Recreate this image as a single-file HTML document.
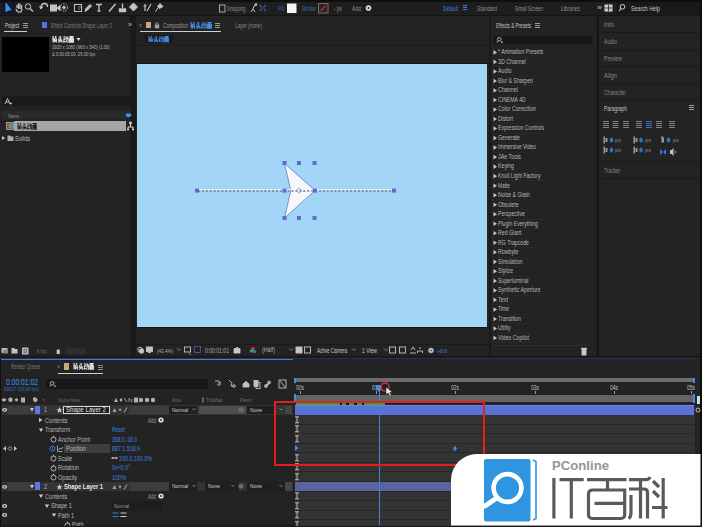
<!DOCTYPE html>
<html><head><meta charset="utf-8">
<style>
*{margin:0;padding:0;box-sizing:border-box}
html,body{width:702px;height:527px;overflow:hidden;background:#1a1a1a;font-family:"Liberation Sans",sans-serif;font-size:7px;line-height:1}
.a{position:absolute}
.t{position:absolute;white-space:nowrap;line-height:1;transform-origin:0 0}
svg{overflow:visible}
</style></head><body>
<div class="a" style="left:0px;top:0px;width:702px;height:16px;background:#1e1e1e;"></div>
<div class="a" style="left:0px;top:0px;width:702px;height:1.5px;background:#0e0e0e;"></div>
<div class="a" style="left:0px;top:14.5px;width:702px;height:2px;background:#141414;"></div>
<div class="a" style="left:616px;top:2px;width:84px;height:12px;background:#191919;"></div>
<div class="a" style="left:0px;top:16px;width:130px;height:340px;background:#232323;"></div>
<div class="a" style="left:136px;top:16px;width:353px;height:340px;background:#232323;"></div>
<div class="a" style="left:491px;top:16px;width:105px;height:340px;background:#232323;"></div>
<div class="a" style="left:599px;top:16px;width:101px;height:340px;background:#232323;"></div>
<div class="a" style="left:137px;top:64px;width:350px;height:263px;background:#a2d5f6;"></div>
<div class="a" style="left:0px;top:359px;width:700px;height:166px;background:#232323;"></div>
<div class="a" style="left:0px;top:357.5px;width:702px;height:2.5px;background:#1e3462;"></div>
<div class="a" style="left:0px;top:358.5px;width:702px;height:1px;background:#5478c0;"></div>
<svg class="a" style="left:0;top:0" width="702" height="16" viewBox="0 0 702 16">
<g fill="none" stroke="#c4c4c4" stroke-width="1">
<rect x="1.5" y="1.5" width="13" height="13" fill="#14192a" stroke="none"/>
<path d="M6 3 L6 12 L8 10 L11 10 Z" fill="#3d8df0" stroke="#3d8df0"/>
<path d="M17 8 L17 5 M18.5 9 L18.5 3.5 M20 9 L20 3.5 M21.5 9 L21.5 5 M16 9 Q17 12 19 12 L21 12 L22 9" stroke-width="1.2"/>
<circle cx="28" cy="6.5" r="2.7"/><path d="M30 8.5 L33 11.5" stroke-width="1.4"/>
<path d="M41 8 Q41 3.5 44.5 3.5 Q47.5 3.5 47.5 7" stroke-width="1.4"/><path d="M39.5 6.5 L41 9 L42.8 6.8" fill="#c4c4c4"/>
<rect x="50.5" y="5" width="6" height="6" fill="#c4c4c4"/><path d="M57 8 L60 5.5 L60 10.5 Z" fill="#c4c4c4"/>
<circle cx="64" cy="7.5" r="3.6" stroke-dasharray="1.4 1.2"/><circle cx="64" cy="7.5" r="1.3" fill="#c4c4c4"/>
<rect x="74.5" y="4.5" width="7" height="7"/><path d="M78 7 L81 7 M78 9 L80 9" stroke="#777"/>
<path d="M85 11.5 L86 8.5 L90 4.5 L91.5 6 L87.5 10 Z" fill="#c4c4c4"/>
<path d="M96 4.5 L102 4.5 M99 4.5 L99 11 M97.5 11 L100.5 11" stroke-width="1.3"/>
<path d="M109 11.5 L115.5 4" stroke-width="1.5"/>
<path d="M122.5 3.5 L122.5 8 M119.5 9 L125.5 9 L125.5 11.5 L119.5 11.5 Z" fill="#c4c4c4" stroke-width="1.3"/>
<path d="M133.5 3 L137.5 7 L133.5 11 L129.5 7 Z" fill="#c4c4c4"/>
<path d="M145 4 L145 11 M143.5 6 L146.5 6 M147 11 L151 4" stroke-width="1.2"/>
<path d="M160 3.5 L163 6.5 L159.5 8.5 L157.5 6.5 Z M158 8 L155.5 11.5" fill="#c4c4c4"/>
<rect x="219.5" y="5" width="5.5" height="7" stroke="#a8a8a8"/>
<path d="M251 12 L253 9 L255 12 M253 9 L254 6 L256 5" stroke="#c4c4c4"/><circle cx="256" cy="4.5" r="0.9" fill="#c4c4c4"/>
<path d="M259.5 5 L262 7.5 M266 5 L263.5 7.5 M259.5 11 L262 8.5 M266 11 L263.5 8.5" stroke="#3a62a0" stroke-width="1.1"/>
<rect x="287" y="3.5" width="9.5" height="9.5" fill="#f4f4f4" stroke="none"/>
<rect x="318.5" y="3.5" width="9.5" height="9.5" fill="#262626" stroke="#7a6a6a"/><path d="M320.5 11 L326 5.5" stroke="#c02828" stroke-width="1.4"/>
<circle cx="368.5" cy="8" r="2.8" fill="#d8d8d8" stroke="none"/><circle cx="368.5" cy="8" r="1" fill="#1b1b1b" stroke="none"/>
<path d="M463 5.5 H467 M463 7.5 H467 M463 9.5 H467" stroke="#3b7fd8"/>
<rect x="604.5" y="4.5" width="8" height="7" fill="#cfcfcf" stroke="none"/><path d="M608.5 5 L608.5 11 M605 8 L612 8" stroke="#1b1b1b" stroke-width="0.8"/>
<circle cx="622.5" cy="6.8" r="2.3" stroke="#d0d0d0"/><path d="M621 8.5 L619 11" stroke="#d0d0d0" stroke-width="1.2"/>
</g></svg>
<div class="t" style="left:227px;top:5.13px;font-size:7px;color:#8e8e8e;transform:scaleX(0.625);">Snapping</div>
<div class="t" style="left:278px;top:4.63px;font-size:7px;color:#3468b8;transform:scaleX(0.671);">Fill</div>
<div class="t" style="left:302px;top:4.63px;font-size:7px;color:#3468b8;transform:scaleX(0.692);">Stroke</div>
<div class="t" style="left:334px;top:5.13px;font-size:7px;color:#8e8e8e;transform:scaleX(0.686);">- px</div>
<div class="t" style="left:352px;top:4.63px;font-size:7px;color:#8e8e8e;transform:scaleX(0.694);">Add:</div>
<div class="t" style="left:443px;top:4.63px;font-size:7px;color:#3d86e0;transform:scaleX(0.676);">Default</div>
<div class="t" style="left:477px;top:5.13px;font-size:7px;color:#8e8e8e;transform:scaleX(0.704);">Standard</div>
<div class="t" style="left:515px;top:5.13px;font-size:7px;color:#8e8e8e;transform:scaleX(0.673);">Small Screen</div>
<div class="t" style="left:561px;top:5.13px;font-size:7px;color:#8e8e8e;transform:scaleX(0.708);">Libraries</div>
<div class="t" style="left:597px;top:4.14px;font-size:8px;color:#c8c8c8;transform:scaleX(1.124);">»</div>
<div class="t" style="left:631px;top:5.13px;font-size:7px;color:#c8c8c8;transform:scaleX(0.753);">Search Help</div>
<div class="t" style="left:5px;top:21.63px;font-size:7px;color:#d4d4d4;transform:scaleX(0.643);">Project</div>
<div class="a" style="left:4px;top:30.5px;width:23px;height:1.2px;background:#cfcfcf;"></div>
<svg class="a" style="left:23px;top:23px" width="6" height="6"><path d="M0 0.5H5M0 2.5H5M0 4.5H5" stroke="#9a9a9a" stroke-width="1"/></svg>
<div class="a" style="left:42px;top:22px;width:5px;height:6px;background:#4f72e6;"></div>
<div class="t" style="left:51px;top:21.63px;font-size:7px;color:#7d7d7d;transform:scaleX(0.654);">Effect Controls Shape Layer 2</div>
<div class="t" style="left:128px;top:21.14px;font-size:8px;color:#bdbdbd;transform:scaleX(0.899);">»</div>
<div class="t" style="left:139px;top:23.09px;font-size:5px;color:#8a8a8a;transform:scaleX(1.200);">x</div>
<div class="a" style="left:146px;top:21.5px;width:4.5px;height:6.5px;background:#c8a878;"></div>
<svg class="a" style="left:154px;top:21px" width="6" height="8"><rect x="0.8" y="3.5" width="4.4" height="3.8" fill="#a0a0a0"/><path d="M1.8 3.5V2.2Q3 0.6 4.2 2.2V3.5" fill="none" stroke="#a0a0a0" stroke-width="0.8"/></svg>
<div class="t" style="left:163px;top:21.63px;font-size:7px;color:#9a9a9a;transform:scaleX(0.643);">Composition</div>
<svg class="a" style="left:190px;top:21.75px" width="22.0" height="6.5" viewBox="0 0 43 10" preserveAspectRatio="none"><g fill="none" stroke="#4a8ee8" stroke-width="1.75"><path transform="translate(0,0)" d="M1 1.5L4 1.5M6 1.5L9 1.5M2.5 0L1.5 3M7.5 0L6.5 3M0.5 4.5L9.5 4.5M2 5.5L2 10M2 5.5L5 5.5L5 10M2 7.8L5 7.8M7 6L7 9M9 5.5L9 10"/><path transform="translate(11,0)" d="M3 1L4.5 2.5M2 3.5L3.5 5M0.5 6.5L9.5 6.5M6 0L6 6.5Q5.5 9 1 10M6.5 7.5L9.5 10"/><path transform="translate(22,0)" d="M0.5 1.5L4.5 1.5M0 4.5L5 4.5M2.5 4.5L0.5 9L4.5 8.5M5 3L9.5 3L9.5 9.5L8 10M7.2 0.5L7.2 5Q6.5 8.5 5 10"/><path transform="translate(33,0)" d="M0.5 1L9.5 1M1 3L1 9.5L9 9.5L9 3M3 3L7 3L7 7.5L3 7.5ZM5 3L5 7.5M3 5.2L7 5.2"/></g></svg>
<svg class="a" style="left:215px;top:23px" width="6" height="6"><path d="M0 0.5H5M0 2.5H5M0 4.5H5" stroke="#9a9a9a" stroke-width="1"/></svg>
<div class="a" style="left:140px;top:30.5px;width:81px;height:1.2px;background:#cfcfcf;"></div>
<div class="t" style="left:235px;top:21.63px;font-size:7px;color:#8a8a8a;transform:scaleX(0.680);">Layer (none)</div>
<div class="a" style="left:144px;top:35px;width:29px;height:8px;background:#1a1a1a;border-radius:1px"></div>
<svg class="a" style="left:148px;top:36.00px" width="21.0" height="6" viewBox="0 0 43 10" preserveAspectRatio="none"><g fill="none" stroke="#4a8ee8" stroke-width="1.75"><path transform="translate(0,0)" d="M1 1.5L4 1.5M6 1.5L9 1.5M2.5 0L1.5 3M7.5 0L6.5 3M0.5 4.5L9.5 4.5M2 5.5L2 10M2 5.5L5 5.5L5 10M2 7.8L5 7.8M7 6L7 9M9 5.5L9 10"/><path transform="translate(11,0)" d="M3 1L4.5 2.5M2 3.5L3.5 5M0.5 6.5L9.5 6.5M6 0L6 6.5Q5.5 9 1 10M6.5 7.5L9.5 10"/><path transform="translate(22,0)" d="M0.5 1.5L4.5 1.5M0 4.5L5 4.5M2.5 4.5L0.5 9L4.5 8.5M5 3L9.5 3L9.5 9.5L8 10M7.2 0.5L7.2 5Q6.5 8.5 5 10"/><path transform="translate(33,0)" d="M0.5 1L9.5 1M1 3L1 9.5L9 9.5L9 3M3 3L7 3L7 7.5L3 7.5ZM5 3L5 7.5M3 5.2L7 5.2"/></g></svg>
<div class="a" style="left:136px;top:44.5px;width:353px;height:0.8px;background:#1c1c1c;"></div>
<div class="a" style="left:136px;top:62.8px;width:353px;height:1.2px;background:#141414;"></div>
<div class="a" style="left:136px;top:327px;width:353px;height:1px;background:#141414;"></div>
<div class="a" style="left:136px;top:343.5px;width:353px;height:1px;background:#1a1a1a;"></div>
<div class="t" style="left:496px;top:21.63px;font-size:7px;color:#c4c4c4;transform:scaleX(0.654);">Effects &amp; Presets</div>
<svg class="a" style="left:535px;top:23px" width="6" height="6"><path d="M0 0.5H5M0 2.5H5M0 4.5H5" stroke="#9a9a9a" stroke-width="1"/></svg>
<div class="a" style="left:494px;top:36px;width:99px;height:8px;background:#181818;"></div>
<svg class="a" style="left:496px;top:36px" width="8" height="8"><circle cx="3.2" cy="3.3" r="1.8" fill="none" stroke="#c0c0c0" stroke-width="0.9"/><path d="M2.2 4.8L0.8 6.6M5 6.2L6.8 6.2M5.9 5.3L5.9 7.1" stroke="#c0c0c0" stroke-width="0.8"/></svg>
<div class="a" style="left:2px;top:37px;width:47px;height:35px;background:#000000;"></div>
<svg class="a" style="left:52px;top:36.25px" width="22.0" height="6.5" viewBox="0 0 43 10" preserveAspectRatio="none"><g fill="none" stroke="#e6e6e6" stroke-width="1.875"><path transform="translate(0,0)" d="M1 1.5L4 1.5M6 1.5L9 1.5M2.5 0L1.5 3M7.5 0L6.5 3M0.5 4.5L9.5 4.5M2 5.5L2 10M2 5.5L5 5.5L5 10M2 7.8L5 7.8M7 6L7 9M9 5.5L9 10"/><path transform="translate(11,0)" d="M3 1L4.5 2.5M2 3.5L3.5 5M0.5 6.5L9.5 6.5M6 0L6 6.5Q5.5 9 1 10M6.5 7.5L9.5 10"/><path transform="translate(22,0)" d="M0.5 1.5L4.5 1.5M0 4.5L5 4.5M2.5 4.5L0.5 9L4.5 8.5M5 3L9.5 3L9.5 9.5L8 10M7.2 0.5L7.2 5Q6.5 8.5 5 10"/><path transform="translate(33,0)" d="M0.5 1L9.5 1M1 3L1 9.5L9 9.5L9 3M3 3L7 3L7 7.5L3 7.5ZM5 3L5 7.5M3 5.2L7 5.2"/></g></svg>
<svg class="a" style="left:76px;top:37px" width="5" height="5"><path d="M0.5 1L4.5 1L2.5 4Z" fill="#e0e0e0"/></svg>
<div class="t" style="left:52px;top:44.11px;font-size:6px;color:#b4b4b4;transform:scaleX(0.702);">1920 x 1080  (960 x 540) (1.00)</div>
<div class="t" style="left:52px;top:50.61px;font-size:6px;color:#b4b4b4;transform:scaleX(0.697);">&#916; 0:00:05:00, 25.00 fps</div>
<div class="a" style="left:2px;top:96px;width:128px;height:10px;background:#1a1a1a;"></div>
<svg class="a" style="left:4px;top:97px" width="9" height="8"><path d="M1 7L3.5 1.5L6 7M2 5H5M5.5 6.5H8M6.7 5.5V7.5" fill="none" stroke="#c8c8c8" stroke-width="0.9"/></svg>
<div class="a" style="left:2px;top:111px;width:128px;height:8px;background:#2a2a2a;"></div>
<div class="t" style="left:8px;top:112.61px;font-size:6px;color:#8c8c8c;transform:scaleX(0.687);">Name</div>
<svg class="a" style="left:125px;top:112px" width="7" height="6"><ellipse cx="3.5" cy="3" rx="3" ry="2" fill="#2f78d8"/><path d="M1.8 2.6L3.5 4L5.2 2.6" stroke="#cfe" stroke-width="0.6" fill="none"/></svg>
<div class="a" style="left:14px;top:121px;width:112px;height:10px;background:#a6a6a6;"></div>
<svg class="a" style="left:6px;top:122px" width="8" height="8"><rect x="0.5" y="0.5" width="7" height="7" fill="#555" stroke="#bbb" stroke-width="0.7"/><rect x="1.5" y="1.5" width="2" height="5" fill="#d44"/><rect x="3.5" y="1.5" width="2" height="5" fill="#4c4"/><rect x="5.5" y="1.5" width="1.5" height="5" fill="#48d"/></svg>
<svg class="a" style="left:17px;top:122.75px" width="20.0" height="6.5" viewBox="0 0 43 10" preserveAspectRatio="none"><g fill="none" stroke="#1a1a1a" stroke-width="1.625"><path transform="translate(0,0)" d="M1 1.5L4 1.5M6 1.5L9 1.5M2.5 0L1.5 3M7.5 0L6.5 3M0.5 4.5L9.5 4.5M2 5.5L2 10M2 5.5L5 5.5L5 10M2 7.8L5 7.8M7 6L7 9M9 5.5L9 10"/><path transform="translate(11,0)" d="M3 1L4.5 2.5M2 3.5L3.5 5M0.5 6.5L9.5 6.5M6 0L6 6.5Q5.5 9 1 10M6.5 7.5L9.5 10"/><path transform="translate(22,0)" d="M0.5 1.5L4.5 1.5M0 4.5L5 4.5M2.5 4.5L0.5 9L4.5 8.5M5 3L9.5 3L9.5 9.5L8 10M7.2 0.5L7.2 5Q6.5 8.5 5 10"/><path transform="translate(33,0)" d="M0.5 1L9.5 1M1 3L1 9.5L9 9.5L9 3M3 3L7 3L7 7.5L3 7.5ZM5 3L5 7.5M3 5.2L7 5.2"/></g></svg>
<svg class="a" style="left:127px;top:121px" width="7" height="10"><circle cx="3.5" cy="2" r="1.4" fill="#ddd"/><path d="M3.5 3V5.5M1 8.5V6H6V8.5" fill="none" stroke="#ddd" stroke-width="1"/><circle cx="1" cy="8.5" r="1" fill="#ddd"/><circle cx="6" cy="8.5" r="1" fill="#ddd"/></svg>
<svg class="a" style="left:1px;top:134px" width="16" height="8"><path d="M1 2L4 4L1 6Z" fill="#cfcfcf"/><path d="M6.5 1.5H9L10 2.5H12.5V7H6.5Z" fill="#b0b0b0"/></svg>
<div class="t" style="left:15px;top:135.13px;font-size:7px;color:#bcbcbc;transform:scaleX(0.787);">Solids</div>
<svg class="a" style="left:0;top:345px" width="130" height="12"><g fill="#c4c4c4">
<rect x="1.5" y="3" width="6" height="5" rx="1"/><rect x="3" y="4.5" width="5" height="4" rx="1" fill="#888"/>
<path d="M11.5 3H14L15 4H17.5V8.5H11.5Z"/>
<rect x="22" y="2.5" width="6.5" height="7" fill="#b9b9b9"/><rect x="23.5" y="4" width="3.5" height="4" fill="#4a77b0"/><rect x="24.5" y="5" width="1.5" height="2" fill="#d8a040"/>
<path d="M56 3.5H60.5M56.7 4.5H59.8V9H56.7Z"/>
</g><rect x="65" y="2.5" width="21" height="7" rx="3.5" fill="#2e2e2e"/></svg>
<div class="t" style="left:37px;top:348.59px;font-size:5px;color:#6e6e6e;transform:scaleX(0.818);">8 bpc</div>
<div class="a" style="left:0px;top:354.5px;width:702px;height:0.8px;background:#2a1c1c;"></div>
<div class="a" style="left:492px;top:56.699999999999996px;width:98px;height:0.8px;background:#282828;"></div>
<div class="a" style="left:492px;top:66.22px;width:98px;height:0.8px;background:#282828;"></div>
<div class="a" style="left:492px;top:75.74px;width:98px;height:0.8px;background:#282828;"></div>
<div class="a" style="left:492px;top:85.25999999999999px;width:98px;height:0.8px;background:#282828;"></div>
<div class="a" style="left:492px;top:94.77999999999999px;width:98px;height:0.8px;background:#282828;"></div>
<div class="a" style="left:492px;top:104.3px;width:98px;height:0.8px;background:#282828;"></div>
<div class="a" style="left:492px;top:113.82px;width:98px;height:0.8px;background:#282828;"></div>
<div class="a" style="left:492px;top:123.33999999999999px;width:98px;height:0.8px;background:#282828;"></div>
<div class="a" style="left:492px;top:132.86px;width:98px;height:0.8px;background:#282828;"></div>
<div class="a" style="left:492px;top:142.38px;width:98px;height:0.8px;background:#282828;"></div>
<div class="a" style="left:492px;top:151.9px;width:98px;height:0.8px;background:#282828;"></div>
<div class="a" style="left:492px;top:161.42000000000002px;width:98px;height:0.8px;background:#282828;"></div>
<div class="a" style="left:492px;top:170.94px;width:98px;height:0.8px;background:#282828;"></div>
<div class="a" style="left:492px;top:180.46px;width:98px;height:0.8px;background:#282828;"></div>
<div class="a" style="left:492px;top:189.98000000000002px;width:98px;height:0.8px;background:#282828;"></div>
<div class="a" style="left:492px;top:199.5px;width:98px;height:0.8px;background:#282828;"></div>
<div class="a" style="left:492px;top:209.02px;width:98px;height:0.8px;background:#282828;"></div>
<div class="a" style="left:492px;top:218.54000000000002px;width:98px;height:0.8px;background:#282828;"></div>
<div class="a" style="left:492px;top:228.06px;width:98px;height:0.8px;background:#282828;"></div>
<div class="a" style="left:492px;top:237.58px;width:98px;height:0.8px;background:#282828;"></div>
<div class="a" style="left:492px;top:247.1px;width:98px;height:0.8px;background:#282828;"></div>
<div class="a" style="left:492px;top:256.62px;width:98px;height:0.8px;background:#282828;"></div>
<div class="a" style="left:492px;top:266.14px;width:98px;height:0.8px;background:#282828;"></div>
<div class="a" style="left:492px;top:275.65999999999997px;width:98px;height:0.8px;background:#282828;"></div>
<div class="a" style="left:492px;top:285.18px;width:98px;height:0.8px;background:#282828;"></div>
<div class="a" style="left:492px;top:294.7px;width:98px;height:0.8px;background:#282828;"></div>
<div class="a" style="left:492px;top:304.21999999999997px;width:98px;height:0.8px;background:#282828;"></div>
<div class="a" style="left:492px;top:313.73999999999995px;width:98px;height:0.8px;background:#282828;"></div>
<div class="a" style="left:492px;top:323.26px;width:98px;height:0.8px;background:#282828;"></div>
<div class="a" style="left:492px;top:332.78px;width:98px;height:0.8px;background:#282828;"></div>
<div class="a" style="left:492px;top:342.29999999999995px;width:98px;height:0.8px;background:#282828;"></div>
<div class="t" style="left:498px;top:49.22px;font-size:6.6px;color:#b8b8b8;transform:scaleX(0.790);">* Animation Presets</div>
<div class="t" style="left:498px;top:58.74px;font-size:6.6px;color:#b8b8b8;transform:scaleX(0.798);">3D Channel</div>
<div class="t" style="left:498px;top:68.26px;font-size:6.6px;color:#b8b8b8;transform:scaleX(0.800);">Audio</div>
<div class="t" style="left:498px;top:77.78px;font-size:6.6px;color:#b8b8b8;transform:scaleX(0.782);">Blur &amp; Sharpen</div>
<div class="t" style="left:498px;top:87.30px;font-size:6.6px;color:#b8b8b8;transform:scaleX(0.814);">Channel</div>
<div class="t" style="left:498px;top:96.82px;font-size:6.6px;color:#b8b8b8;transform:scaleX(0.781);">CINEMA 4D</div>
<div class="t" style="left:498px;top:106.34px;font-size:6.6px;color:#b8b8b8;transform:scaleX(0.791);">Color Correction</div>
<div class="t" style="left:498px;top:115.86px;font-size:6.6px;color:#b8b8b8;transform:scaleX(0.787);">Distort</div>
<div class="t" style="left:498px;top:125.38px;font-size:6.6px;color:#b8b8b8;transform:scaleX(0.779);">Expression Controls</div>
<div class="t" style="left:498px;top:134.90px;font-size:6.6px;color:#b8b8b8;transform:scaleX(0.800);">Generate</div>
<div class="t" style="left:498px;top:144.42px;font-size:6.6px;color:#b8b8b8;transform:scaleX(0.775);">Immersive Video</div>
<div class="t" style="left:498px;top:153.94px;font-size:6.6px;color:#b8b8b8;transform:scaleX(0.807);">JAe Tools</div>
<div class="t" style="left:498px;top:163.46px;font-size:6.6px;color:#b8b8b8;transform:scaleX(0.793);">Keying</div>
<div class="t" style="left:498px;top:172.98px;font-size:6.6px;color:#b8b8b8;transform:scaleX(0.778);">Knoll Light Factory</div>
<div class="t" style="left:498px;top:182.50px;font-size:6.6px;color:#b8b8b8;transform:scaleX(0.727);">Matte</div>
<div class="t" style="left:498px;top:192.02px;font-size:6.6px;color:#b8b8b8;transform:scaleX(0.779);">Noise &amp; Grain</div>
<div class="t" style="left:498px;top:201.54px;font-size:6.6px;color:#b8b8b8;transform:scaleX(0.776);">Obsolete</div>
<div class="t" style="left:498px;top:211.06px;font-size:6.6px;color:#b8b8b8;transform:scaleX(0.783);">Perspective</div>
<div class="t" style="left:498px;top:220.58px;font-size:6.6px;color:#b8b8b8;transform:scaleX(0.779);">Plugin Everything</div>
<div class="t" style="left:498px;top:230.10px;font-size:6.6px;color:#b8b8b8;transform:scaleX(0.791);">Red Giant</div>
<div class="t" style="left:498px;top:239.62px;font-size:6.6px;color:#b8b8b8;transform:scaleX(0.790);">RG Trapcode</div>
<div class="t" style="left:498px;top:249.14px;font-size:6.6px;color:#b8b8b8;transform:scaleX(0.798);">Rowbyte</div>
<div class="t" style="left:498px;top:258.66px;font-size:6.6px;color:#b8b8b8;transform:scaleX(0.795);">Simulation</div>
<div class="t" style="left:498px;top:268.18px;font-size:6.6px;color:#b8b8b8;transform:scaleX(0.772);">Stylize</div>
<div class="t" style="left:498px;top:277.70px;font-size:6.6px;color:#b8b8b8;transform:scaleX(0.792);">Superluminal</div>
<div class="t" style="left:498px;top:287.22px;font-size:6.6px;color:#b8b8b8;transform:scaleX(0.788);">Synthetic Aperture</div>
<div class="t" style="left:498px;top:296.74px;font-size:6.6px;color:#b8b8b8;transform:scaleX(0.826);">Text</div>
<div class="t" style="left:498px;top:306.26px;font-size:6.6px;color:#b8b8b8;transform:scaleX(0.763);">Time</div>
<div class="t" style="left:498px;top:315.78px;font-size:6.6px;color:#b8b8b8;transform:scaleX(0.801);">Transition</div>
<div class="t" style="left:498px;top:325.30px;font-size:6.6px;color:#b8b8b8;transform:scaleX(0.775);">Utility</div>
<div class="t" style="left:498px;top:334.82px;font-size:6.6px;color:#b8b8b8;transform:scaleX(0.792);">Video Copilot</div>
<svg class="a" style="left:493px;top:44px" width="6" height="300"><g fill="#c8c8c8"><path d="M0.5 6.10L4 8.40L0.5 10.70Z"/><path d="M0.5 15.62L4 17.92L0.5 20.22Z"/><path d="M0.5 25.14L4 27.44L0.5 29.74Z"/><path d="M0.5 34.66L4 36.96L0.5 39.26Z"/><path d="M0.5 44.18L4 46.48L0.5 48.78Z"/><path d="M0.5 53.70L4 56.00L0.5 58.30Z"/><path d="M0.5 63.22L4 65.52L0.5 67.82Z"/><path d="M0.5 72.74L4 75.04L0.5 77.34Z"/><path d="M0.5 82.26L4 84.56L0.5 86.86Z"/><path d="M0.5 91.78L4 94.08L0.5 96.38Z"/><path d="M0.5 101.30L4 103.60L0.5 105.90Z"/><path d="M0.5 110.82L4 113.12L0.5 115.42Z"/><path d="M0.5 120.34L4 122.64L0.5 124.94Z"/><path d="M0.5 129.86L4 132.16L0.5 134.46Z"/><path d="M0.5 139.38L4 141.68L0.5 143.98Z"/><path d="M0.5 148.90L4 151.20L0.5 153.50Z"/><path d="M0.5 158.42L4 160.72L0.5 163.02Z"/><path d="M0.5 167.94L4 170.24L0.5 172.54Z"/><path d="M0.5 177.46L4 179.76L0.5 182.06Z"/><path d="M0.5 186.98L4 189.28L0.5 191.58Z"/><path d="M0.5 196.50L4 198.80L0.5 201.10Z"/><path d="M0.5 206.02L4 208.32L0.5 210.62Z"/><path d="M0.5 215.54L4 217.84L0.5 220.14Z"/><path d="M0.5 225.06L4 227.36L0.5 229.66Z"/><path d="M0.5 234.58L4 236.88L0.5 239.18Z"/><path d="M0.5 244.10L4 246.40L0.5 248.70Z"/><path d="M0.5 253.62L4 255.92L0.5 258.22Z"/><path d="M0.5 263.14L4 265.44L0.5 267.74Z"/><path d="M0.5 272.66L4 274.96L0.5 277.26Z"/><path d="M0.5 282.18L4 284.48L0.5 286.78Z"/><path d="M0.5 291.70L4 294.00L0.5 296.30Z"/></g></svg>
<svg class="a" style="left:579.5px;top:347px" width="8" height="9"><rect x="1.5" y="2" width="5" height="6.5" fill="#c8c8c8"/><rect x="1" y="0.8" width="6" height="1.2" fill="#c8c8c8"/></svg>
<div class="a" style="left:491px;top:344.5px;width:99px;height:1px;background:#2e2e2e;"></div>
<div class="t" style="left:603.5px;top:21.13px;font-size:7px;color:#858585;transform:scaleX(0.857);">Info</div>
<div class="t" style="left:603.5px;top:38.13px;font-size:7px;color:#858585;transform:scaleX(0.726);">Audio</div>
<div class="t" style="left:603.5px;top:55.13px;font-size:7px;color:#858585;transform:scaleX(0.723);">Preview</div>
<div class="t" style="left:603.5px;top:71.63px;font-size:7px;color:#858585;transform:scaleX(0.835);">Align</div>
<div class="t" style="left:603.5px;top:88.63px;font-size:7px;color:#858585;transform:scaleX(0.716);">Character</div>
<div class="t" style="left:603.5px;top:105.13px;font-size:7px;color:#c4c4c4;transform:scaleX(0.704);">Paragraph</div>
<div class="a" style="left:602px;top:32px;width:96px;height:1px;background:#1a1a1a;"></div>
<div class="a" style="left:602px;top:49.5px;width:96px;height:1px;background:#1a1a1a;"></div>
<div class="a" style="left:602px;top:66px;width:96px;height:1px;background:#1a1a1a;"></div>
<div class="a" style="left:602px;top:83px;width:96px;height:1px;background:#1a1a1a;"></div>
<div class="a" style="left:602px;top:100px;width:96px;height:1px;background:#1a1a1a;"></div>
<svg class="a" style="left:689px;top:105px" width="6" height="7"><path d="M0 0.5H5M0 2.5H5M0 4.5H5" stroke="#9a9a9a" stroke-width="1"/></svg>
<svg class="a" style="left:0;top:0" width="702" height="200" viewBox="0 0 702 200"><g stroke="#8c8c8c" stroke-width="0.9"><path d="M603 121.5H609M603 123.5H609M603 125.5H609M603 127.5H609"/></g><g stroke="#8c8c8c" stroke-width="0.9"><path d="M612.5 121.5H618.5M612.5 123.5H618.5M612.5 125.5H618.5M612.5 127.5H618.5"/></g><g stroke="#8c8c8c" stroke-width="0.9"><path d="M623 121.5H629M623 123.5H629M623 125.5H629M623 127.5H629"/></g><g stroke="#8c8c8c" stroke-width="0.9"><path d="M636 121.5H642M636 123.5H642M636 125.5H642M636 127.5H642"/></g><g stroke="#3b78d8" stroke-width="0.9"><path d="M646 121.5H652M646 123.5H652M646 125.5H652M646 127.5H652"/></g><g stroke="#8c8c8c" stroke-width="0.9"><path d="M656 121.5H662M656 123.5H662M656 125.5H662M656 127.5H662"/></g><g stroke="#8c8c8c" stroke-width="0.9"><path d="M669 121.5H675M669 123.5H675M669 125.5H675M669 127.5H675"/></g></svg>
<svg class="a" style="left:600px;top:134px" width="100" height="24"><g fill="#9a9a9a">
<rect x="3.5" y="2.5" width="1.5" height="7"/><rect x="5.5" y="4" width="2" height="4"/><rect x="3.5" y="12.5" width="1.5" height="7"/><rect x="5.5" y="14" width="2" height="4"/>
<rect x="33.5" y="2.5" width="1.5" height="7"/><rect x="35.5" y="4" width="2" height="4"/><rect x="33.5" y="12.5" width="1.5" height="7"/><rect x="35.5" y="14" width="2" height="4"/>
<rect x="61.5" y="2" width="1.2" height="3"/><rect x="61.5" y="3.5" width="2.5" height="5"/>
</g><g fill="#2f6fd0">
<ellipse cx="11.5" cy="6" rx="1.8" ry="2.6"/><ellipse cx="11.5" cy="16" rx="1.8" ry="2.6"/>
<ellipse cx="41" cy="6" rx="1.8" ry="2.6"/><ellipse cx="41" cy="16" rx="1.8" ry="2.6"/>
<ellipse cx="68.5" cy="6" rx="1.8" ry="2.6"/>
<path d="M60 15L63 18L60 21ZM66 15L63 18L66 21Z" fill="#2f7ae0"/>
</g><g fill="#c0c0c0"><path d="M70 16H71.5L73.5 14V22L71.5 20H70Z"/><path d="M74.5 16.5l1.5 1.5l-1.5 1.5" stroke="#c0c0c0" stroke-width="0.7" fill="none"/></g></svg>
<div class="t" style="left:615px;top:137.11px;font-size:6px;color:#8e8e8e;transform:scaleX(0.947);">px</div>
<div class="t" style="left:615px;top:147.11px;font-size:6px;color:#8e8e8e;transform:scaleX(0.947);">px</div>
<div class="t" style="left:645px;top:137.11px;font-size:6px;color:#8e8e8e;transform:scaleX(0.947);">px</div>
<div class="t" style="left:645px;top:147.11px;font-size:6px;color:#8e8e8e;transform:scaleX(0.947);">px</div>
<div class="t" style="left:673px;top:137.11px;font-size:6px;color:#8e8e8e;transform:scaleX(0.947);">px</div>
<div class="a" style="left:602px;top:161px;width:96px;height:1px;background:#1a1a1a;"></div>
<div class="t" style="left:603.5px;top:166.63px;font-size:7px;color:#858585;transform:scaleX(0.703);">Tracker</div>
<div class="a" style="left:602px;top:178px;width:96px;height:1px;background:#1a1a1a;"></div>
<div class="a" style="left:596px;top:16px;width:3px;height:340px;background:#1e1e1e;"></div>
<div class="a" style="left:597px;top:16px;width:1.5px;height:340px;background:#151515;"></div>
<svg class="a" style="left:137px;top:64px" width="350" height="263" viewBox="137 64 350 263">
<path d="M284.5 163.5 L315 190.5 L284.5 218 L290.8 190.5Z" fill="#f7f8fa" stroke="#6f86d0" stroke-width="0.9"/>
<line x1="197" y1="189.9" x2="394" y2="189.9" stroke="#f4f6f8" stroke-width="1.3"/>
<line x1="198" y1="190.9" x2="394" y2="190.9" stroke="#707a98" stroke-width="1.5" stroke-dasharray="2 1.9"/>
<g fill="#5a6cd6">
<rect x="282.5" y="161" width="4" height="4"/><rect x="297" y="161" width="4" height="4"/><rect x="312.5" y="161" width="4" height="4"/>
<rect x="282.5" y="216" width="4" height="4"/><rect x="297" y="216" width="4" height="4"/><rect x="312.5" y="216" width="4" height="4"/>
<rect x="195" y="188.6" width="4" height="4"/><rect x="282.5" y="188.6" width="4" height="4"/><rect x="313" y="188.6" width="4" height="4"/><rect x="392" y="188.6" width="4" height="4"/>
</g>
<path d="M296 190.6 L299 188 L302 190.6 L299 193.2Z" fill="none" stroke="#8e9ac8" stroke-width="0.8"/>
</svg>
<svg class="a" style="left:136px;top:344px" width="353" height="13" viewBox="136 344 353 13"><g fill="none" stroke="#c4c4c4" stroke-width="0.9">
<circle cx="140" cy="349.5" r="2.3"/><circle cx="141.5" cy="351" r="2.3" fill="#c4c4c4"/>
<rect x="146.5" y="347" width="6" height="4.5" fill="#c4c4c4"/><path d="M148 352.5h3"/>
<rect x="184.5" y="347" width="6" height="5"/><path d="M189 353.5l1.5 1" />
<rect x="194.5" y="346.5" width="6" height="6" stroke="#5a6ae0" stroke-dasharray="2 1"/>
<path d="M234 348.5h6v4.5h-6z M236 347.5h2" fill="#c8c8c8"/>
<circle cx="253" cy="348.5" r="1.8" fill="#e03030" stroke="none"/><circle cx="251.5" cy="351" r="1.8" fill="#30b040" stroke="none"/><circle cx="254.5" cy="351.5" r="1.8" fill="#3070e0" stroke="none"/>
<rect x="296" y="347" width="6" height="6" fill="#c4c4c4"/><rect x="304.5" y="347" width="6" height="6"/>
<rect x="389.5" y="347" width="6" height="6"/><rect x="399.5" y="347" width="6" height="6"/>
<path d="M410 353h6M411 350l2-3l2 3" /><path d="M420 347v2M417.5 353v-2h5v2" /><circle cx="431" cy="350.5" r="2.3" fill="#c4c4c4"/><circle cx="431" cy="350.5" r="0.8" fill="#232323" stroke="none"/>
<path d="M177 348.5l2 2l2-2M289 348.5l2 2l2-2M352 348.5l2 2l2-2M384 348.5l2 2l2-2" stroke="#8a8a8a"/>
</g></svg>
<div class="t" style="left:157px;top:347.61px;font-size:6px;color:#a8a8a8;transform:scaleX(0.762);">(43.4%)</div>
<div class="t" style="left:205px;top:347.87px;font-size:6.5px;color:#a8a8a8;transform:scaleX(0.781);">0:00:01:01</div>
<div class="t" style="left:262px;top:347.37px;font-size:6.5px;color:#b0b0b0;transform:scaleX(0.818);">(Half)</div>
<div class="t" style="left:317px;top:347.13px;font-size:7px;color:#c8c8c8;transform:scaleX(0.654);">Active Camera</div>
<div class="t" style="left:362px;top:347.13px;font-size:7px;color:#c8c8c8;transform:scaleX(0.718);">1 View</div>
<div class="t" style="left:437px;top:347.61px;font-size:6px;color:#3b82e0;transform:scaleX(0.844);">+0.0</div>
<div class="t" style="left:11px;top:362.63px;font-size:7px;color:#7e7e7e;transform:scaleX(0.632);">Render Queue</div>
<div class="t" style="left:57px;top:364.09px;font-size:5px;color:#8a8a8a;transform:scaleX(1.200);">x</div>
<div class="a" style="left:64px;top:362.5px;width:4.5px;height:7px;background:#c8a878;"></div>
<svg class="a" style="left:73px;top:362.75px" width="21.0" height="6.5" viewBox="0 0 43 10" preserveAspectRatio="none"><g fill="none" stroke="#dcdcdc" stroke-width="1.875"><path transform="translate(0,0)" d="M1 1.5L4 1.5M6 1.5L9 1.5M2.5 0L1.5 3M7.5 0L6.5 3M0.5 4.5L9.5 4.5M2 5.5L2 10M2 5.5L5 5.5L5 10M2 7.8L5 7.8M7 6L7 9M9 5.5L9 10"/><path transform="translate(11,0)" d="M3 1L4.5 2.5M2 3.5L3.5 5M0.5 6.5L9.5 6.5M6 0L6 6.5Q5.5 9 1 10M6.5 7.5L9.5 10"/><path transform="translate(22,0)" d="M0.5 1.5L4.5 1.5M0 4.5L5 4.5M2.5 4.5L0.5 9L4.5 8.5M5 3L9.5 3L9.5 9.5L8 10M7.2 0.5L7.2 5Q6.5 8.5 5 10"/><path transform="translate(33,0)" d="M0.5 1L9.5 1M1 3L1 9.5L9 9.5L9 3M3 3L7 3L7 7.5L3 7.5ZM5 3L5 7.5M3 5.2L7 5.2"/></g></svg>
<svg class="a" style="left:98px;top:365px" width="6" height="6"><path d="M0 0.5H5M0 2.5H5M0 4.5H5" stroke="#8a8a8a" stroke-width="1"/></svg>
<div class="a" style="left:58px;top:372.5px;width:45px;height:1.2px;background:#cfcfcf;"></div>
<div class="t" style="left:6px;top:377.66px;font-size:9px;color:#3d8ff0;transform:scaleX(0.752);">0:00:01:02</div>
<div class="t" style="left:4px;top:387.09px;font-size:5px;color:#2e6cc0;transform:scaleX(0.893);">00027 (25.00 fps)</div>
<div class="a" style="left:46px;top:379px;width:162px;height:10px;background:#181818;"></div>
<svg class="a" style="left:49px;top:380px" width="9" height="8"><circle cx="3.2" cy="3.3" r="1.8" fill="none" stroke="#c0c0c0" stroke-width="0.9"/><path d="M2.2 4.8L0.8 6.6M5 6.2L6.8 6.2M5.9 5.3L5.9 7.1" stroke="#c0c0c0" stroke-width="0.8"/></svg>
<svg class="a" style="left:210px;top:377px" width="83" height="14" viewBox="210 377 83 14"><g fill="none" stroke="#c0c0c0" stroke-width="0.9">
<path d="M215 381h4l2 2h-3M217 384l2 1.5l2-1.5" /><path d="M229 380l3 3l-1 3h3" /><circle cx="234" cy="386" r="1.3"/>
<path d="M243 387v-3l3-2.5l3 2.5v3z" fill="#c0c0c0"/>
<rect x="254" y="380.5" width="4" height="6" fill="#c0c0c0"/><rect x="256" y="382.5" width="4" height="6"/>
<path d="M265 387l5-5" stroke-width="1.6"/><circle cx="266" cy="386" r="1.5"/><circle cx="269" cy="382.5" r="1.5"/>
<rect x="279" y="380" width="7" height="8"/><path d="M280 381l5 6"/>
</g></svg>
<div class="a" style="left:2px;top:396px;width:291px;height:8.5px;background:#232323;"></div>
<svg class="a" style="left:0;top:395px" width="293" height="10" viewBox="0 395 293 10"><g fill="#b0b0b0" stroke="none">
<ellipse cx="4" cy="399.8" rx="2.2" ry="1.6"/><circle cx="10.5" cy="399.8" r="2.2"/><circle cx="16.5" cy="399.8" r="1.6"/><rect x="21" y="397.5" width="4" height="5"/>
<path d="M33 397.5h3l2 2.5l-2.5 2.5l-2.5-2z"/><path d="M43.5 398.5l1 2h-2z" fill="#777"/>
<path d="M114 402h4l-2-4z"/><path d="M119.5 400l1.5-2l1.5 2l-1.5 2z"/><path d="M124 398l3 4" stroke="#b0b0b0" stroke-width="0.9"/>
<rect x="134" y="397.5" width="4" height="5"/><circle cx="141" cy="400" r="2.2"/><circle cx="147" cy="400" r="2.2"/><circle cx="153" cy="400" r="2.2"/>
<path d="M203 397.5v5" stroke="#b0b0b0" stroke-width="0.9"/>
</g></svg>
<div class="t" style="left:128px;top:397.59px;font-size:5px;color:#b0b0b0;transform:scaleX(1.286);">fx</div>
<div class="t" style="left:58px;top:397.59px;font-size:5px;color:#6e6e6e;transform:scaleX(0.720);">Source Name</div>
<div class="t" style="left:172px;top:397.59px;font-size:5px;color:#6e6e6e;transform:scaleX(0.720);">Mode</div>
<div class="t" style="left:206px;top:397.59px;font-size:5px;color:#6e6e6e;transform:scaleX(1.041);">TrkMat</div>
<div class="t" style="left:240px;top:397.59px;font-size:5px;color:#6e6e6e;transform:scaleX(0.815);">Parent</div>
<div class="a" style="left:2px;top:405px;width:291px;height:9.5px;background:#333333;"></div>
<div class="a" style="left:8px;top:405.5px;width:4.5px;height:8.5px;background:#3d3d3d;"></div>
<div class="a" style="left:13px;top:405.5px;width:4.5px;height:8.5px;background:#3d3d3d;"></div>
<div class="a" style="left:18px;top:405.5px;width:4.5px;height:8.5px;background:#3d3d3d;"></div>
<div class="a" style="left:23px;top:405.5px;width:4.5px;height:8.5px;background:#3d3d3d;"></div>
<div class="a" style="left:28px;top:405.5px;width:4.5px;height:8.5px;background:#3d3d3d;"></div>
<div class="a" style="left:35px;top:405.8px;width:4.5px;height:8px;background:#5b76e6;"></div>
<svg class="a" style="left:0;top:405px" width="170" height="10"><ellipse cx="4.6" cy="4.8" rx="2.6" ry="1.9" fill="#c8c8c8"/><circle cx="4.6" cy="4.8" r="0.9" fill="#333"/><path d="M30 3L34 3L32 6.5Z" fill="#c8c8c8"/><path d="M59.5 2l1 2.2h2.2l-1.8 1.4l0.7 2.3l-2.1-1.4l-2.1 1.4l0.7-2.3l-1.8-1.4h2.2z" fill="#c8c8c8"/><path d="M112.5 7h4l-2-4z M118.5 4.8l1.5-1.5l1.5 1.5l-1.5 1.5z" fill="#a0a0a0"/><path d="M124 7.5l3-5" stroke="#c0c0c0" stroke-width="0.9"/></svg>
<div class="t" style="left:44px;top:406.43px;font-size:7px;color:#bdbdbd;transform:scaleX(0.771);">1</div>
<div class="a" style="left:63px;top:405.5px;width:46.5px;height:8.5px;background:#1e1e1e;border:1px solid #d8d8d8"></div>
<div class="t" style="left:66px;top:406.43px;font-size:7px;color:#e0e0e0;transform:scaleX(0.879);">Shape Layer 2</div>
<div class="a" style="left:130px;top:405.5px;width:5.5px;height:8.5px;background:#3d3d3d;"></div>
<div class="a" style="left:136px;top:405.5px;width:5.5px;height:8.5px;background:#3d3d3d;"></div>
<div class="a" style="left:142px;top:405.5px;width:5.5px;height:8.5px;background:#3d3d3d;"></div>
<div class="a" style="left:148px;top:405.5px;width:5.5px;height:8.5px;background:#3d3d3d;"></div>
<div class="a" style="left:154px;top:405.5px;width:5.5px;height:8.5px;background:#3d3d3d;"></div>
<div class="a" style="left:160px;top:405.5px;width:5.5px;height:8.5px;background:#3d3d3d;"></div>
<div class="a" style="left:166px;top:405.5px;width:5.5px;height:8.5px;background:#3d3d3d;"></div>
<div class="a" style="left:285px;top:405.5px;width:7px;height:8.5px;background:#454545;"></div>
<div class="a" style="left:169px;top:405.5px;width:28px;height:8.5px;background:#1f1f1f;"></div>
<div class="t" style="left:172px;top:406.91px;font-size:6px;color:#cfcfcf;transform:scaleX(0.828);">Normal</div>
<div class="a" style="left:199px;top:405.5px;width:47px;height:8.5px;background:#4e4e4e;"></div>
<div class="a" style="left:247px;top:405.5px;width:28px;height:8.5px;background:#1f1f1f;"></div>
<div class="t" style="left:250px;top:406.91px;font-size:6px;color:#cfcfcf;transform:scaleX(0.837);">None</div>
<svg class="a" style="left:160px;top:405px" width="130" height="10" viewBox="160 405 130 10"><path d="M192.5 408.5l1.5 1.5l1.5-1.5M279.5 408.5l1.5 1.5l1.5-1.5" fill="none" stroke="#9a9a9a" stroke-width="0.8"/><circle cx="241" cy="409.8" r="2.5" fill="#6a6a6a"/></svg>
<svg class="a" style="left:38px;top:417px" width="6" height="6"><path d="M1 0.8L4.5 3L1 5.2Z" fill="#c8c8c8"/></svg>
<div class="t" style="left:45px;top:416.63px;font-size:7px;color:#b8b8b8;transform:scaleX(0.800);">Contents</div>
<div class="t" style="left:148px;top:416.63px;font-size:7px;color:#9a9a9a;transform:scaleX(0.625);">Add:</div>
<svg class="a" style="left:158px;top:417px" width="6" height="6"><circle cx="3" cy="3" r="2.6" fill="#e0e0e0"/><circle cx="3" cy="3" r="0.9" fill="#232323"/></svg>
<svg class="a" style="left:38px;top:426.5px" width="6" height="6"><path d="M0.8 1.5L5.2 1.5L3 5Z" fill="#c8c8c8"/></svg>
<div class="t" style="left:45px;top:426.13px;font-size:7px;color:#b8b8b8;transform:scaleX(0.800);">Transform</div>
<div class="t" style="left:112px;top:426.13px;font-size:7px;color:#3b82e0;transform:scaleX(0.711);">Reset</div>
<svg class="a" style="left:50px;top:435px" width="7" height="8"><circle cx="3.5" cy="4.5" r="2.5" fill="none" stroke="#bdbdbd" stroke-width="0.9"/><path d="M3.5 0.8v1.4" stroke="#bdbdbd" stroke-width="1"/></svg>
<div class="t" style="left:58px;top:435.63px;font-size:7px;color:#b8b8b8;transform:scaleX(0.800);">Anchor Point</div>
<div class="t" style="left:112px;top:435.63px;font-size:7px;color:#3b82e0;transform:scaleX(0.706);">368.0,-16.0</div>
<div class="a" style="left:64px;top:444px;width:46px;height:9px;background:#3e3e3e;"></div>
<div class="t" style="left:66px;top:445.13px;font-size:7px;color:#b8b8b8;transform:scaleX(0.800);">Position</div>
<svg class="a" style="left:48px;top:444px" width="16" height="9"><circle cx="4.5" cy="4.5" r="2.5" fill="none" stroke="#3b82e0" stroke-width="0.9"/><path d="M4.5 3v2l1.2 0.8" stroke="#3b82e0" stroke-width="0.8" fill="none"/><path d="M9.5 1.5v6h5M10.5 6l1.5-2l1.5 1l1.5-2" stroke="#c0c0c0" stroke-width="0.8" fill="none"/></svg>
<svg class="a" style="left:1px;top:444px" width="18" height="9"><path d="M5 2L2 4.5L5 7Z M13 2L16 4.5L13 7Z" fill="#c0c0c0"/><path d="M9 2.5L11 4.5L9 6.5L7 4.5Z" fill="none" stroke="#c0c0c0" stroke-width="0.8"/></svg>
<div class="t" style="left:112px;top:445.13px;font-size:7px;color:#3b82e0;transform:scaleX(0.757);">887.1,518.9</div>
<svg class="a" style="left:50px;top:454px" width="7" height="8"><circle cx="3.5" cy="4.5" r="2.5" fill="none" stroke="#bdbdbd" stroke-width="0.9"/><path d="M3.5 0.8v1.4" stroke="#bdbdbd" stroke-width="1"/></svg>
<div class="t" style="left:58px;top:454.63px;font-size:7px;color:#b8b8b8;transform:scaleX(0.800);">Scale</div>
<svg class="a" style="left:111px;top:455px" width="7" height="6"><path d="M1.5 3h4" stroke="#c0c0c0" stroke-width="2.2" stroke-linecap="round"/><path d="M2 3h3" stroke="#232323" stroke-width="0.8"/></svg>
<div class="t" style="left:119px;top:454.63px;font-size:7px;color:#3b82e0;transform:scaleX(0.764);">100.0,100.0%</div>
<svg class="a" style="left:50px;top:463.5px" width="7" height="8"><circle cx="3.5" cy="4.5" r="2.5" fill="none" stroke="#bdbdbd" stroke-width="0.9"/><path d="M3.5 0.8v1.4" stroke="#bdbdbd" stroke-width="1"/></svg>
<div class="t" style="left:58px;top:464.13px;font-size:7px;color:#b8b8b8;transform:scaleX(0.800);">Rotation</div>
<div class="t" style="left:112px;top:464.13px;font-size:7px;color:#3b82e0;transform:scaleX(0.750);">0x+0.0&#176;</div>
<svg class="a" style="left:50px;top:473px" width="7" height="8"><circle cx="3.5" cy="4.5" r="2.5" fill="none" stroke="#bdbdbd" stroke-width="0.9"/><path d="M3.5 0.8v1.4" stroke="#bdbdbd" stroke-width="1"/></svg>
<div class="t" style="left:58px;top:473.63px;font-size:7px;color:#b8b8b8;transform:scaleX(0.800);">Opacity</div>
<div class="t" style="left:112px;top:473.63px;font-size:7px;color:#3b82e0;transform:scaleX(0.782);">100%</div>
<div class="a" style="left:2px;top:481.5px;width:291px;height:9.5px;background:#333333;"></div>
<div class="a" style="left:8px;top:482.0px;width:4.5px;height:8.5px;background:#3d3d3d;"></div>
<div class="a" style="left:13px;top:482.0px;width:4.5px;height:8.5px;background:#3d3d3d;"></div>
<div class="a" style="left:18px;top:482.0px;width:4.5px;height:8.5px;background:#3d3d3d;"></div>
<div class="a" style="left:23px;top:482.0px;width:4.5px;height:8.5px;background:#3d3d3d;"></div>
<div class="a" style="left:28px;top:482.0px;width:4.5px;height:8.5px;background:#3d3d3d;"></div>
<div class="a" style="left:35px;top:482.3px;width:4.5px;height:8px;background:#5b76e6;"></div>
<svg class="a" style="left:0;top:481.5px" width="170" height="10"><ellipse cx="4.6" cy="4.8" rx="2.6" ry="1.9" fill="#c8c8c8"/><circle cx="4.6" cy="4.8" r="0.9" fill="#333"/><path d="M30 3L34 3L32 6.5Z" fill="#c8c8c8"/><path d="M59.5 2l1 2.2h2.2l-1.8 1.4l0.7 2.3l-2.1-1.4l-2.1 1.4l0.7-2.3l-1.8-1.4h2.2z" fill="#c8c8c8"/><path d="M112.5 7h4l-2-4z M118.5 4.8l1.5-1.5l1.5 1.5l-1.5 1.5z" fill="#a0a0a0"/><path d="M124 7.5l3-5" stroke="#c0c0c0" stroke-width="0.9"/></svg>
<div class="t" style="left:44px;top:482.93px;font-size:7px;color:#bdbdbd;transform:scaleX(0.771);">2</div>
<div class="t" style="left:64px;top:482.93px;font-size:7px;color:#e8e8e8;font-weight:bold;transform:scaleX(0.822);">Shape Layer 1</div>
<div class="a" style="left:130px;top:482.0px;width:5.5px;height:8.5px;background:#3d3d3d;"></div>
<div class="a" style="left:136px;top:482.0px;width:5.5px;height:8.5px;background:#3d3d3d;"></div>
<div class="a" style="left:142px;top:482.0px;width:5.5px;height:8.5px;background:#3d3d3d;"></div>
<div class="a" style="left:148px;top:482.0px;width:5.5px;height:8.5px;background:#3d3d3d;"></div>
<div class="a" style="left:154px;top:482.0px;width:5.5px;height:8.5px;background:#3d3d3d;"></div>
<div class="a" style="left:160px;top:482.0px;width:5.5px;height:8.5px;background:#3d3d3d;"></div>
<div class="a" style="left:166px;top:482.0px;width:5.5px;height:8.5px;background:#3d3d3d;"></div>
<div class="a" style="left:285px;top:482.0px;width:7px;height:8.5px;background:#454545;"></div>
<div class="a" style="left:169px;top:482px;width:28px;height:8.5px;background:#1f1f1f;"></div>
<div class="t" style="left:172px;top:483.41px;font-size:6px;color:#cfcfcf;transform:scaleX(0.828);">Normal</div>
<div class="a" style="left:205px;top:482px;width:34px;height:8.5px;background:#1f1f1f;"></div>
<div class="t" style="left:208px;top:483.41px;font-size:6px;color:#cfcfcf;transform:scaleX(0.837);">None</div>
<div class="a" style="left:247px;top:482px;width:38px;height:8.5px;background:#1f1f1f;"></div>
<div class="t" style="left:250px;top:483.41px;font-size:6px;color:#cfcfcf;transform:scaleX(0.837);">None</div>
<svg class="a" style="left:160px;top:481px" width="130" height="10" viewBox="160 481 130 10"><path d="M192.5 485l1.5 1.5l1.5-1.5M231.5 485l1.5 1.5l1.5-1.5M279.5 485l1.5 1.5l1.5-1.5" fill="none" stroke="#9a9a9a" stroke-width="0.8"/><circle cx="241" cy="486.3" r="2.5" fill="#6a6a6a"/></svg>
<svg class="a" style="left:38px;top:493px" width="6" height="6"><path d="M0.8 1.5L5.2 1.5L3 5Z" fill="#c8c8c8"/></svg>
<div class="t" style="left:45px;top:492.63px;font-size:7px;color:#b8b8b8;transform:scaleX(0.800);">Contents</div>
<div class="t" style="left:148px;top:492.63px;font-size:7px;color:#9a9a9a;transform:scaleX(0.625);">Add:</div>
<svg class="a" style="left:158px;top:493px" width="6" height="6"><circle cx="3" cy="3" r="2.6" fill="#e0e0e0"/><circle cx="3" cy="3" r="0.9" fill="#232323"/></svg>
<svg class="a" style="left:44px;top:502.5px" width="6" height="6"><path d="M0.8 1.5L5.2 1.5L3 5Z" fill="#c8c8c8"/></svg>
<div class="t" style="left:51px;top:502.13px;font-size:7px;color:#b8b8b8;transform:scaleX(0.800);">Shape 1</div>
<div class="a" style="left:112px;top:500.5px;width:51px;height:10px;background:#1d1d1d;"></div>
<div class="t" style="left:114px;top:502.61px;font-size:6px;color:#9a9a9a;transform:scaleX(0.776);">Normal</div>
<svg class="a" style="left:51px;top:512px" width="6" height="6"><path d="M0.8 1.5L5.2 1.5L3 5Z" fill="#c8c8c8"/></svg>
<div class="t" style="left:58px;top:511.63px;font-size:7px;color:#b8b8b8;transform:scaleX(0.800);">Path 1</div>
<svg class="a" style="left:112px;top:511px" width="16" height="8"><path d="M0.5 2h6M0.5 5.5h6" stroke="#3a78e0" stroke-width="1.2"/><path d="M8.5 2h6M8.5 5.5h6" stroke="#d0d0d0" stroke-width="1.2"/></svg>
<svg class="a" style="left:64px;top:520.5px" width="7" height="8"><circle cx="3.5" cy="4.5" r="2.5" fill="none" stroke="#bdbdbd" stroke-width="0.9"/><path d="M3.5 0.8v1.4" stroke="#bdbdbd" stroke-width="1"/></svg>
<div class="t" style="left:72px;top:521.13px;font-size:7px;color:#b8b8b8;transform:scaleX(0.800);">Path</div>
<svg class="a" style="left:0;top:502.5px" width="8" height="6"><ellipse cx="4.6" cy="3" rx="2.6" ry="1.9" fill="#c8c8c8"/><circle cx="4.6" cy="3" r="0.9" fill="#232323"/></svg>
<svg class="a" style="left:0;top:512px" width="8" height="6"><ellipse cx="4.6" cy="3" rx="2.6" ry="1.9" fill="#c8c8c8"/><circle cx="4.6" cy="3" r="0.9" fill="#232323"/></svg>
<div class="a" style="left:0px;top:359px;width:1.2px;height:168px;background:#0e0e0e;"></div>
<div class="a" style="left:293px;top:359px;width:404px;height:166px;background:#232323;"></div>
<div class="a" style="left:294px;top:378px;width:401px;height:4.3px;background:#6c6c6c;"></div>
<div class="a" style="left:293.5px;top:377.5px;width:2px;height:5px;background:#3a8ff0;"></div>
<div class="a" style="left:692.5px;top:377.5px;width:2px;height:5px;background:#3a8ff0;"></div>
<div class="t" style="left:295.5px;top:383.63px;font-size:7px;color:#c4c4c4;transform:scaleX(0.709);">00s</div>
<div class="a" style="left:299.5px;top:390.5px;width:0.8px;height:3.5px;background:#9a9a9a;"></div>
<div class="t" style="left:371.5px;top:383.63px;font-size:7px;color:#c4c4c4;transform:scaleX(0.709);">01s</div>
<div class="a" style="left:375.5px;top:390.5px;width:0.8px;height:3.5px;background:#9a9a9a;"></div>
<div class="t" style="left:450.5px;top:383.63px;font-size:7px;color:#c4c4c4;transform:scaleX(0.709);">02s</div>
<div class="a" style="left:454.5px;top:390.5px;width:0.8px;height:3.5px;background:#9a9a9a;"></div>
<div class="t" style="left:530.5px;top:383.63px;font-size:7px;color:#c4c4c4;transform:scaleX(0.709);">03s</div>
<div class="a" style="left:534.5px;top:390.5px;width:0.8px;height:3.5px;background:#9a9a9a;"></div>
<div class="t" style="left:609.5px;top:383.63px;font-size:7px;color:#c4c4c4;transform:scaleX(0.709);">04s</div>
<div class="a" style="left:613.5px;top:390.5px;width:0.8px;height:3.5px;background:#9a9a9a;"></div>
<div class="t" style="left:687.0px;top:383.63px;font-size:7px;color:#c4c4c4;transform:scaleX(0.709);">05s</div>
<div class="a" style="left:691.0px;top:390.5px;width:0.8px;height:3.5px;background:#9a9a9a;"></div>
<div class="a" style="left:294px;top:394.5px;width:401px;height:7px;background:#646464;"></div>
<div class="a" style="left:293.5px;top:393.5px;width:2px;height:9px;background:#3a8ff0;"></div>
<div class="a" style="left:692.5px;top:393.5px;width:2px;height:9px;background:#3a8ff0;"></div>
<div class="a" style="left:295px;top:405px;width:400px;height:124px;background:#333333;"></div>
<div class="a" style="left:295px;top:414px;width:400px;height:1px;background:#282828;"></div>
<div class="a" style="left:295px;top:423.5px;width:400px;height:1px;background:#282828;"></div>
<div class="a" style="left:295px;top:433px;width:400px;height:1px;background:#282828;"></div>
<div class="a" style="left:295px;top:442.5px;width:400px;height:1px;background:#282828;"></div>
<div class="a" style="left:295px;top:452px;width:400px;height:1px;background:#282828;"></div>
<div class="a" style="left:295px;top:461.5px;width:400px;height:1px;background:#282828;"></div>
<div class="a" style="left:295px;top:471px;width:400px;height:1px;background:#282828;"></div>
<div class="a" style="left:295px;top:480.5px;width:400px;height:1px;background:#282828;"></div>
<div class="a" style="left:295px;top:490.5px;width:400px;height:1px;background:#282828;"></div>
<div class="a" style="left:295px;top:500px;width:400px;height:1px;background:#282828;"></div>
<div class="a" style="left:295px;top:509.5px;width:400px;height:1px;background:#282828;"></div>
<div class="a" style="left:295px;top:519px;width:400px;height:1px;background:#282828;"></div>
<div class="a" style="left:295px;top:528.5px;width:400px;height:1px;background:#282828;"></div>
<div class="a" style="left:295px;top:405px;width:399px;height:9.5px;background:#5a72d8;"></div>
<div class="a" style="left:296px;top:403px;width:89px;height:1.8px;background:#2ea02e;background:linear-gradient(90deg,#2aa82a 0 44px,#161616 44px 46px,#2aa82a 46px 50px,#161616 50px 53px,#2aa82a 53px 58px,#161616 58px 61px,#2aa82a 61px 66px,#161616 66px 68px,#2aa82a 68px 89px)"></div>
<div class="a" style="left:295px;top:405px;width:399px;height:1px;background:#6f86e6;"></div>
<div class="a" style="left:295px;top:481.5px;width:399px;height:9.5px;background:#5b64a2;"></div>
<svg class="a" style="left:294px;top:415.7px" width="6" height="8"><path d="M1 0.8H5M3 0.8V6.8M1 6.8H5" stroke="#c8c8c8" stroke-width="0.9"/></svg>
<svg class="a" style="left:294px;top:425.2px" width="6" height="8"><path d="M1 0.8H5M3 0.8V6.8M1 6.8H5" stroke="#c8c8c8" stroke-width="0.9"/></svg>
<svg class="a" style="left:294px;top:434.7px" width="6" height="8"><path d="M1 0.8H5M3 0.8V6.8M1 6.8H5" stroke="#c8c8c8" stroke-width="0.9"/></svg>
<svg class="a" style="left:294px;top:444px" width="6" height="8"><path d="M1 1L4.5 4L1 7Z" fill="#3a8ff0"/></svg>
<svg class="a" style="left:294px;top:453.7px" width="6" height="8"><path d="M1 0.8H5M3 0.8V6.8M1 6.8H5" stroke="#c8c8c8" stroke-width="0.9"/></svg>
<svg class="a" style="left:294px;top:463.2px" width="6" height="8"><path d="M1 0.8H5M3 0.8V6.8M1 6.8H5" stroke="#c8c8c8" stroke-width="0.9"/></svg>
<svg class="a" style="left:294px;top:472.7px" width="6" height="8"><path d="M1 0.8H5M3 0.8V6.8M1 6.8H5" stroke="#c8c8c8" stroke-width="0.9"/></svg>
<svg class="a" style="left:294px;top:492.2px" width="6" height="8"><path d="M1 0.8H5M3 0.8V6.8M1 6.8H5" stroke="#c8c8c8" stroke-width="0.9"/></svg>
<svg class="a" style="left:294px;top:501.7px" width="6" height="8"><path d="M1 0.8H5M3 0.8V6.8M1 6.8H5" stroke="#c8c8c8" stroke-width="0.9"/></svg>
<svg class="a" style="left:294px;top:511.2px" width="6" height="8"><path d="M1 0.8H5M3 0.8V6.8M1 6.8H5" stroke="#c8c8c8" stroke-width="0.9"/></svg>
<svg class="a" style="left:294px;top:520.7px" width="6" height="8"><path d="M1 0.8H5M3 0.8V6.8M1 6.8H5" stroke="#c8c8c8" stroke-width="0.9"/></svg>
<svg class="a" style="left:452px;top:445px" width="6" height="7"><path d="M3 0.8L5 3.5L3 6.2L1 3.5Z" fill="#3a8ff0"/></svg>
<div class="a" style="left:378.5px;top:389px;width:1px;height:136px;background:#4a80c8;"></div>
<svg class="a" style="left:374px;top:382px" width="12" height="12"><path d="M2 3H8V7L5 10L2 7Z" fill="#3a8ff0"/></svg>
<svg class="a" style="left:376px;top:380px" width="20" height="18"><circle cx="9" cy="7" r="4" fill="none" stroke="#e02a2a" stroke-width="1.6"/><path d="M10 7L10 15L12 13L14 16.5L15.5 15.8L13.8 12.5L16.5 12.3Z" fill="#f0f0f0" stroke="#222" stroke-width="0.6"/></svg>
<div class="a" style="left:695px;top:359px;width:5px;height:168px;background:#232323;"></div>
<div class="a" style="left:700px;top:0px;width:2px;height:527px;background:#0c0c0c;"></div>
<div class="a" style="left:697px;top:396px;width:3px;height:8px;background:#d8d8d8;"></div>
<svg class="a" style="left:695px;top:405px" width="6" height="10"><circle cx="3" cy="5" r="2" fill="none" stroke="#c8c8c8" stroke-width="0.9"/></svg>
<div class="a" style="left:274px;top:401px;width:211px;height:64.5px;background:transparent;border:2px solid #e41e1e"></div>
<svg class="a" style="left:450px;top:453px" width="252" height="74" viewBox="450 453 252 74">
<path d="M477 454 H700.5 V525.5 H451 V480 A26 26 0 0 1 477 454Z" fill="#ffffff"/>
<rect x="484" y="459" width="46.5" height="62.5" rx="2" fill="#2f95e0"/>
<circle cx="507.5" cy="488" r="13.9" fill="none" stroke="#ffffff" stroke-width="4.6"/>
<path d="M497.5 497.5 L483.5 507" stroke="#ffffff" stroke-width="5"/>
<path d="M533 460 L536 461.5 V518.5 L533 520" fill="none" stroke="#2f95e0" stroke-width="1.6"/>
<g fill="none" stroke="#5a5a5a" stroke-width="3.2">
<path d="M553.9 478V518.5"/>
<path d="M559.5 479.7H583.7M571.3 479.7V518.5"/>
<path d="M587 479.7H626.5M607.5 479.7V488.5M591.5 490H624.7V515A3.5 3.5 0 0 1 621.2 518.5H592A3.5 3.5 0 0 1 588.5 515V494A4 4 0 0 1 592 490M594.5 503.3H626"/>
<path d="M629 479.7H646Q649 479.7 650 477M640.5 480V518.5M629 489H644Q647.5 489 647.5 492.5V518.5M631 495V513Q631 517 628.5 518.5"/>
<path d="M653 481L659 487M653 491L659 497M663.2 478V518.5M652 507.5H667.5"/>
</g>
</svg>
<div class="t" style="left:552px;top:459.72px;font-size:12px;color:#969696;font-weight:bold;transform:scaleX(1.096);">PConline</div>
<div class="a" style="left:0px;top:525.5px;width:702px;height:1.5px;background:#1a1a1a;"></div>
</body></html>
